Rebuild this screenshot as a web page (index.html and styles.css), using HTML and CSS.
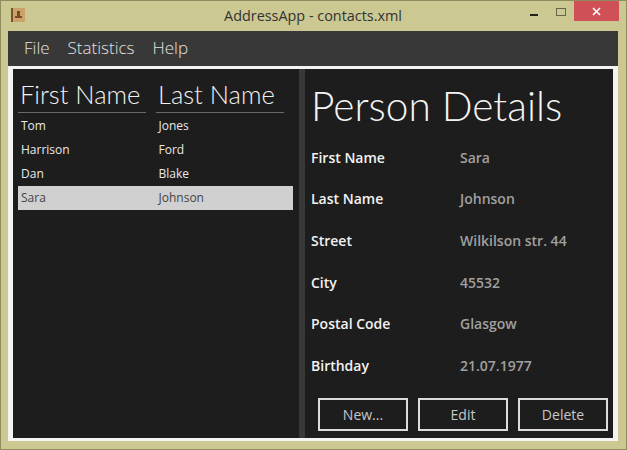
FILE: index.html
```html
<!DOCTYPE html>
<html>
<head>
  <title>AddressApp - contacts.xml</title>
  <link rel="stylesheet" href="styles.css">
</head>
<body>
  <div class="window">
    <div class="titlebar">
      <svg class="app-icon" width="14" height="14" viewBox="0 0 14 14">
        <rect x="0" y="0" width="14" height="14" fill="#c9a36a"/>
        <rect x="0" y="0" width="2" height="14" fill="#7a5228"/>
        <rect x="6" y="3" width="3" height="5" fill="#7a4a20"/>
        <rect x="4" y="8" width="7" height="2" fill="#7a4a20"/>
      </svg>
      <div class="title">AddressApp - contacts.xml</div>
      <div class="controls">
        <div class="min"></div>
        <div class="max"></div>
        <div class="close">
          <svg width="9" height="9" viewBox="0 0 9 9"><path d="M1 1L8 8M8 1L1 8" stroke="#fff" stroke-width="1.6"/></svg>
        </div>
      </div>
    </div>
    <div class="menubar">
      <span>File</span>
      <span>Statistics</span>
      <span>Help</span>
    </div>
    <div class="content">
      <div class="list-pane">
        <div class="table-head">
          <div class="col-head">First Name</div>
          <div class="col-head">Last Name</div>
        </div>
        <div class="row"><div>Tom</div><div>Jones</div></div>
        <div class="row"><div>Harrison</div><div>Ford</div></div>
        <div class="row"><div>Dan</div><div>Blake</div></div>
        <div class="row selected"><div>Sara</div><div>Johnson</div></div>
      </div>
      <div class="divider"></div>
      <div class="details-pane">
        <h1>Person Details</h1>
        <div class="fields">
          <div class="label">First Name</div><div class="value">Sara</div>
          <div class="label">Last Name</div><div class="value">Johnson</div>
          <div class="label">Street</div><div class="value">Wilkilson str. 44</div>
          <div class="label">City</div><div class="value">45532</div>
          <div class="label">Postal Code</div><div class="value">Glasgow</div>
          <div class="label">Birthday</div><div class="value">21.07.1977</div>
        </div>
        <div class="buttons">
          <button>New...</button>
          <button>Edit</button>
          <button>Delete</button>
        </div>
      </div>
    </div>
  </div>
</body>
</html>
```

FILE: styles.css
```css
html, body {
  margin: 0;
  padding: 0;
}

body {
  width: 627px;
  height: 450px;
  overflow: hidden;
  font-family: "Open Sans", "Noto Sans", sans-serif;
}

.window {
  box-sizing: border-box;
  width: 627px;
  height: 450px;
  background: #cbc891;
  border: 1px solid #8f8d5f;
  padding: 0 8px 8px 7px;
  display: flex;
  flex-direction: column;
}

.titlebar {
  height: 30px;
  flex: none;
  display: flex;
  align-items: center;
  position: relative;
}

.app-icon {
  margin-left: 3px;
  margin-top: -2px;
}

.title {
  position: absolute;
  left: 0;
  right: 0;
  top: 5px;
  text-align: center;
  font-size: 14.4px;
  line-height: 20px;
  color: #333;
}

.controls {
  position: absolute;
  top: 0;
  right: -1px;
  display: flex;
  align-items: flex-start;
}

.min {
  width: 8px;
  height: 2px;
  background: #222;
  margin: 13px 18px 0 0;
}

.max {
  box-sizing: border-box;
  width: 10px;
  height: 8px;
  border: 1px solid #66644a;
  margin: 7px 8px 0 0;
}

.close {
  width: 45px;
  height: 20px;
  background: #cf5157;
  display: flex;
  align-items: center;
  justify-content: center;
}

.menubar {
  height: 35px;
  flex: none;
  background: #383838;
  color: #e2e2e2;
  font-size: 17px;
  font-weight: 300;
  display: flex;
  align-items: center;
  gap: 18px;
  padding: 0 0 2px 16px;
  box-sizing: border-box;
}

.content {
  flex: 1;
  min-height: 0;
  display: flex;
  background: #1d1d1d;
  border: solid #f4f4f4;
  border-width: 3px 5px;
}

.list-pane {
  width: 286px;
  flex: none;
  box-sizing: border-box;
  padding: 8px 6px 0 5px;
}

.table-head {
  display: flex;
  gap: 10px;
  margin-bottom: 1px;
}

.col-head {
  width: 128px;
  padding-left: 2px;
  box-sizing: border-box;
  height: 36px;
  color: #f2f2f2;
  font-family: "Lato", "Open Sans", sans-serif;
  font-size: 25.5px;
  font-weight: 300;
  line-height: 35px;
  border-bottom: 1px solid #6a6a6a;
  white-space: nowrap;
}

.row {
  display: flex;
  box-sizing: border-box;
  height: 24px;
  padding-bottom: 2px;
  align-items: center;
  color: #e8e8e8;
  font-size: 12px;
}

.row div {
  width: 138px;
  padding-left: 3px;
  box-sizing: border-box;
}

.row.selected {
  background: #d0d0d0;
  color: #444;
}

.divider {
  width: 6px;
  flex: none;
  background: #383838;
}

.details-pane {
  flex: 1;
  min-width: 0;
  box-sizing: border-box;
  padding: 0 5px 0 6px;
  display: flex;
  flex-direction: column;
}

h1 {
  margin: 8px 0 0;
  height: 50px;
  color: #f4f4f4;
  font-family: "Lato", "Open Sans", sans-serif;
  font-size: 40.6px;
  font-weight: 300;
  line-height: 58px;
  white-space: nowrap;
}

.fields {
  display: grid;
  grid-template-columns: 149px 1fr;
  grid-auto-rows: 41.7px;
  align-items: center;
  margin-top: 9.4px;
  font-size: 14px;
}

.label {
  color: #f2f2f2;
  font-weight: 600;
}

.value {
  color: #a0a0a0;
  font-weight: 600;
}

.buttons {
  display: flex;
  gap: 10px;
  padding-left: 7px;
  margin-top: 11px;
}

.buttons button {
  box-sizing: border-box;
  width: 90px;
  height: 33px;
  background: transparent;
  border: 2px solid #dcdcdc;
  color: #c8c8c8;
  font-family: inherit;
  font-size: 14px;
  padding: 0;
}
```
